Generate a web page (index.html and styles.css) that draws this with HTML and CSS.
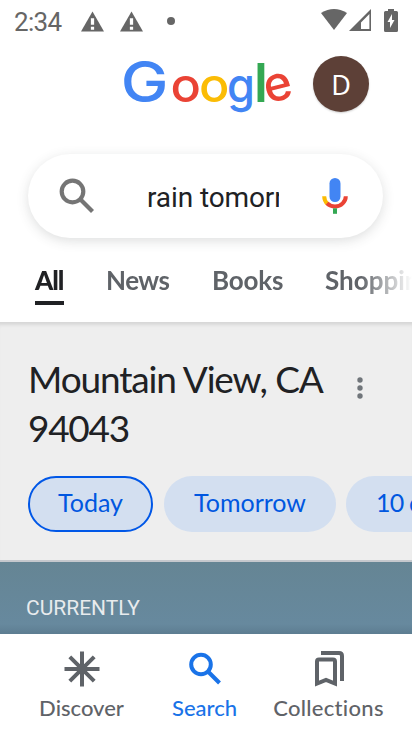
FILE: index.html
```html
<!DOCTYPE html>
<html lang="en">
<head>
<meta charset="utf-8">
<meta name="viewport" content="width=device-width, initial-scale=1">
<title>rain tomorrow</title>
<link rel="stylesheet" href="styles.css">
</head>
<body>
<div class="status">
  <span class="time">2:34</span>
  <svg class="warn" viewBox="0 0 24 21"><path d="M12 0 24 21H0Z"/><path class="cut" d="M10.3 7h3.4v7h-3.4zM10.3 16h3.4v3h-3.4z"/></svg>
  <svg class="warn" viewBox="0 0 24 21"><path d="M12 0 24 21H0Z"/><path class="cut" d="M10.3 7h3.4v7h-3.4zM10.3 16h3.4v3h-3.4z"/></svg>
  <span class="dot"></span>
  <svg class="system" width="80" height="24" viewBox="0 0 80 24"><path d="M1 4Q14-4 27 4L14 21Z"/><path d="M51 0V22H29ZM49.400 5 41 13.500V20h8.400Z" fill-rule="evenodd"/><path d="M68 0h6v2h2.500q1.500 0 1.500 1.500v18q0 1.500-1.500 1.500h-11q-1.500 0-1.500-1.500v-18Q64 2 65.500 2H68Z"/><path class="cut" d="M72 5 67.500 13H70v6L74.500 11H72Z"/></svg>
</div>
<header class="brand">
  <svg class="logo" width="172" height="62" viewBox="0 0 172 62" role="img" aria-label="Google">
    <text class="blue cap" transform="translate(-2.300 46.500) scale(1.140 1)">G</text>
    <text class="red" transform="translate(47.500 46.500) scale(1.050 1)">o</text>
    <text class="yellow" transform="translate(76 46.500) scale(1.050 1)">o</text>
    <text class="blue" transform="translate(104 46.500) scale(.940 1)">g</text>
    <text class="green tall" transform="translate(131 46.500)">l</text>
    <text class="red" transform="translate(144.500 48.500) rotate(-14)">e</text>
  </svg>
  <div class="avatar">D</div>
</header>
<div class="search">
  <svg class="lens" width="36" height="36" viewBox="0 0 36 36"><circle cx="13.500" cy="13.500" r="10.800"/><path d="m21.500 21.500 12 12"/></svg>
  <div class="query">rain tomorrow</div>
  <svg class="mic" width="26" height="36" viewBox="0 0 26 36"><rect x="7.500" y="0" width="11" height="24" rx="5.500" fill="#4285f4"/><path d="M2.200 18.200c0 3.500 1.400 6 3.500 7.800" stroke="#fbbc04"/><path d="M5 25.300c4.500 4.300 11.500 4.300 15.700 0 2-2 3.100-4.200 3.100-7.100" stroke="#ea4335"/><path d="M13 30.300v5.500" stroke="#34a853"/></svg>
</div>
<nav class="tabs"><a class="all">All</a><a class="news">News</a><a class="books">Books</a><a class="shopping">Shopping</a></nav>
<main>
  <div class="place"><h1><span class="city">Mountain View, CA</span><br><span class="zip">94043</span></h1><svg class="more" width="6" height="22" viewBox="0 0 6 22"><circle cx="3" cy="3" r="2.700"/><circle cx="3" cy="11" r="2.700"/><circle cx="3" cy="19" r="2.700"/></svg></div>
  <div class="chips"><span class="chip today">Today</span><span class="chip tomorrow">Tomorrow</span><span class="chip days">10 days</span></div>
  <section class="current">CURRENTLY</section>
</main>
<footer>
  <div class="item discover"><svg width="36" height="36" viewBox="0 0 36 36"><path d="M18 .5v35M.5 18h35M5.800 5.800l24.400 24.400M30.200 5.800 5.800 30.200"/></svg><span>Discover</span></div>
  <div class="item active"><svg width="36" height="36" viewBox="0 0 36 36"><circle cx="14" cy="13.500" r="9.800"/><path d="m21 20.500 11.500 11.500"/></svg><span>Search</span></div>
  <div class="item collections"><svg width="36" height="36" viewBox="0 0 36 36"><path d="M6 32.500V10.500q0-2 2-2h14q2 0 2 2v22L15 29Z"/><path d="M10 2h18q3 0 3 3v25"/></svg><span>Collections</span></div>
</footer>
</body>
</html>
```
FILE: styles.css
```css
* { box-sizing: border-box; }
body { margin: 0; width: 412px; height: 732px; overflow: hidden; display: flex; flex-direction: column; background: #fff; font-family: Lato, sans-serif; color: #202124; }
.status { height: 44px; flex: none; display: flex; align-items: center; padding-left: 14px; color: #666; font: 26px/44px Roboto, sans-serif; }
.time { width: 67px; letter-spacing: -.7px; }
.status svg { fill: #666; }
.status .cut { fill: #fff; }
.warn { width: 23px; height: 21px; margin: -2px 16px 0 0; }
.dot { width: 8px; height: 8px; margin: -2px 0 0 8px; border-radius: 50%; background: #666; }
.system { margin: -2px 12px 0 auto; }
.brand { height: 109px; flex: none; display: flex; align-items: flex-start; padding: 11px 0 0 123px; }
.logo { margin-right: 18px; overflow: visible; font: 500 48px Inter, sans-serif; }
.cap { font-size: 56px; }
.tall { font-size: 53px; font-weight: 600; }
.blue { fill: #4285f4; }
.red { fill: #ea4335; }
.yellow { fill: #fbbc05; }
.green { fill: #34a853; }
.avatar { width: 56px; height: 56px; margin-top: 1px; border-radius: 50%; background: #5d4037; color: #fff; font: 27px/57px "Noto Sans", sans-serif; text-align: center; box-shadow: 0 1px 2px #0003; }
.search { height: 84px; width: 355px; flex: none; margin: 1px 0 1px 28px; border-radius: 42px; box-shadow: 0 3px 12px #3c40432b; display: flex; align-items: center; padding-left: 31px; }
.lens { fill: none; stroke: #757575; stroke-width: 4.200px; }
.query { width: 132px; margin: 3px 43px 0 52px; overflow: hidden; white-space: nowrap; font: 28px/38px Roboto, sans-serif; letter-spacing: -.1px; }
.mic { fill: none; stroke-width: 4px; }
.tabs { height: 83px; flex: none; display: flex; padding: 23px 0 0 35px; overflow: hidden; white-space: nowrap; color: #5f6368; font: 700 26px/36px Lato, sans-serif; -webkit-mask-image: linear-gradient(90deg, #000 360px, transparent 412px); }
.tabs a { flex: none; }
.all { width: 29px; height: 43px; margin-right: 42px; border-bottom: 4px solid #202124; color: #202124; font-weight: 900; letter-spacing: -1px; }
.news { width: 106px; letter-spacing: -.5px; }
.books { width: 113px; letter-spacing: -.2px; }
main { flex: 1; background: #eee; border-top: 1px solid #d8d8d8; box-shadow: inset 0 4px 4px -3px #0002; }
.place { height: 153px; padding: 31px 0 0 28px; display: flex; }
h1 { width: 329px; margin: 0; font: 400 37px/49px Lato, sans-serif; white-space: nowrap; }
.city { letter-spacing: -1.150px; }
.zip { letter-spacing: -1.300px; }
.more { margin-top: 23px; fill: #70757a; }
.chips { height: 86px; display: flex; gap: 11px; padding-left: 28px; overflow: hidden; border-bottom: 2px solid #c5c8cd; }
.chip { flex: none; height: 56px; border-radius: 28px; background: #d3dff0; color: #0057e0; text-align: center; font-size: 25px; line-height: 52px; }
.today { width: 125px; border: 2px solid #0057e7; line-height: 48px; }
.tomorrow { width: 172px; }
.days { width: 150px; margin-left: -1px; padding-left: 30px; text-align: left; letter-spacing: -.8px; }
.current { height: 72px; padding: 30px 26px; background: linear-gradient(#658594, #67899e 62px, #5d7d91 72px); color: #e8ebed; font: 21px/32px Roboto, sans-serif; }
footer { height: 98px; flex: none; display: flex; padding-left: 20px; background: #fff; color: #5f6368; font-size: 22px; line-height: 28px; font-weight: 500; }
.item { width: 123px; display: flex; flex-direction: column; align-items: center; padding-top: 17px; gap: 7px; }
.item svg { fill: none; stroke: currentColor; stroke-width: 4px; flex: none; }
.collections { width: 125px; letter-spacing: .3px; }
.active { color: #1a73e8; }
```
